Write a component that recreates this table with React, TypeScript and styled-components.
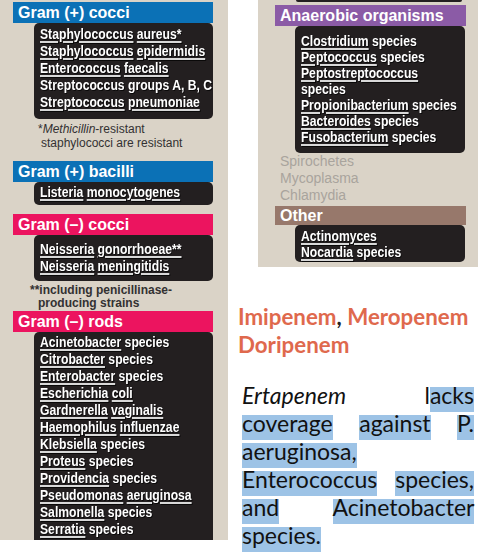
import React from "react";
import styled, { createGlobalStyle } from "styled-components";

const GlobalStyle = createGlobalStyle`
  html, body {
    margin: 0;
    padding: 0;
    background: #ffffff;
  }
`;

const narrow = `"Liberation Sans Narrow", "Arial Narrow", "Liberation Sans", Arial, sans-serif`;

// "_word" = underlined (italic in the printed source)
const grampCocci = [
  "_Staphylococcus _aureus*",
  "_Staphylococcus _epidermidis",
  "_Enterococcus _faecalis",
  "Streptococcus groups A, B, C",
  "_Streptococcus _pneumoniae",
];
const grampBacilli = ["_Listeria _monocytogenes"];
const gramnCocci = ["_Neisseria _gonorrhoeae**", "_Neisseria _meningitidis"];
const gramnRods = [
  "_Acinetobacter species",
  "_Citrobacter species",
  "_Enterobacter species",
  "_Escherichia _coli",
  "_Gardnerella _vaginalis",
  "_Haemophilus _influenzae",
  "_Klebsiella species",
  "_Proteus species",
  "_Providencia species",
  "_Pseudomonas _aeruginosa",
  "_Salmonella species",
  "_Serratia species",
];
const anaerobes = [
  "_Clostridium species",
  "_Peptococcus species",
  "_Peptostreptococcus",
  "species",
  "_Propionibacterium species",
  "_Bacteroides species",
  "_Fusobacterium species",
];
const others = ["_Actinomyces", "_Nocardia species"];

const highlighted = [
  "coverage",
  "against",
  "P.",
  "aeruginosa,",
  "Enterococcus",
  "species,",
  "and",
  "Acinetobacter",
  "species.",
];

function renderLine(text: string) {
  const words = text.split(" ");
  return words.map((w, i) => (
    <React.Fragment key={i}>
      {w.startsWith("_") ? <Name>{w.slice(1)}</Name> : w}
      {i < words.length - 1 ? " " : ""}
    </React.Fragment>
  ));
}

function OrganismBox({ lines, pad, lh = 17 }: { lines: string[]; pad: string; lh?: number }) {
  return (
    <Box $pad={pad} $lh={lh}>
      {lines.map((l) => (
        <Line key={l}>{renderLine(l)}</Line>
      ))}
    </Box>
  );
}

export default function App() {
  return (
    <>
      <GlobalStyle />
      <Page>
        <LeftPanel>
          <Header $bg="#0b71b6">Gram (+) cocci</Header>
          <OrganismBox lines={grampCocci} pad="3px 6px 8px" />
          <Note $mt={3} $indent={41} $lh={14} $weight={400}>
            <NoteLead $shift={3}>
              *<i>Methicillin</i>-resistant
            </NoteLead>
            <div>staphylococci are resistant</div>
          </Note>

          <Header $bg="#0b71b6" $mt={11}>
            Gram (+) bacilli
          </Header>
          <OrganismBox lines={grampBacilli} pad="2px 6px 4px" />

          <Header $bg="#ec145f" $mt={9}>
            Gram (–) cocci
          </Header>
          <OrganismBox lines={gramnCocci} pad="6px 6px 6px" />
          <Note $mt={3} $indent={38} $lh={12.5} $weight={700}>
            <NoteLead $shift={8}>**including penicillinase-</NoteLead>
            <div>producing strains</div>
          </Note>

          <Header $bg="#ec145f" $mt={2}>
            Gram (–) rods
          </Header>
          <OrganismBox lines={gramnRods} pad="2px 6px 8px" />
        </LeftPanel>

        <RightColumn>
          <RightPanel>
            <BoxTail />
            <Header $bg="#8b5ba6" $mt={3}>
              Anaerobic organisms
            </Header>
            <OrganismBox lines={anaerobes} pad="7px 6px 8px" lh={16} />
            <GrayList>
              <div>Spirochetes</div>
              <div>Mycoplasma</div>
              <div>Chlamydia</div>
            </GrayList>
            <Header $bg="#97786b" $mt={2} $h={19}>
              Other
            </Header>
            <OrganismBox lines={others} pad="3px 6px 2px" lh={16} />
          </RightPanel>

          <Title>
            Imipenem<Comma>,</Comma> Meropenem
            <br />
            Doripenem
          </Title>

          <Para>
            <em>Ertapenem</em> l<Mark>acks</Mark>{" "}
            {highlighted.map((w, i) => (
              <React.Fragment key={i}>
                <Mark>{w}</Mark>
                {i < highlighted.length - 1 ? " " : ""}
              </React.Fragment>
            ))}
          </Para>
        </RightColumn>
      </Page>
    </>
  );
}

const Page = styled.div`
  display: flex;
  align-items: flex-start;
  width: 485px;
  height: 558px;
  overflow: hidden;
  background: #ffffff;
`;

const LeftPanel = styled.div`
  --hl: 13px;
  --hr: 15px;
  --bl: 34px;
  --br: 15px;
  box-sizing: border-box;
  width: 228px;
  height: 540px;
  padding-top: 2px;
  overflow: hidden;
  background: #dad3c7;
`;

const RightColumn = styled.div`
  display: flex;
  flex-direction: column;
  width: 242px;
  margin-left: 8px;
`;

const RightPanel = styled.div`
  --hl: 17px;
  --hr: 12px;
  --bl: 37px;
  --br: 13px;
  width: 220px;
  margin-left: 22px;
  padding-bottom: 5px;
  background: #dad3c7;
`;

const BoxTail = styled.div`
  height: 2px;
  margin: 0 16px 0 38px;
  border-radius: 0 0 3px 3px;
  background: #231f20;
`;

const Header = styled.div<{ $bg: string; $mt?: number; $h?: number }>`
  height: ${(p) => p.$h ?? 21}px;
  line-height: ${(p) => p.$h ?? 21}px;
  margin: ${(p) => p.$mt ?? 0}px var(--hr) 0 var(--hl);
  padding-left: 5px;
  font-family: "Liberation Sans", Arial, sans-serif;
  font-size: 16px;
  font-weight: 700;
  color: #ffffff;
  background: ${(p) => p.$bg};
  white-space: nowrap;
`;

const Box = styled.div<{ $pad: string; $lh: number }>`
  margin: 0 var(--br) 0 var(--bl);
  padding: ${(p) => p.$pad};
  border-radius: 5px;
  background: #231f20;
  color: #ffffff;
  font-family: ${narrow};
  font-size: 14px;
  font-weight: 700;
  line-height: ${(p) => p.$lh}px;
  text-shadow: 1px 1px 0 rgba(0, 0, 0, 0.7);
`;

// the print uses a condensed face; squeeze the wide fallback to its width
const Line = styled.div`
  white-space: nowrap;
  transform: scaleX(0.87);
  transform-origin: left center;
`;

const Name = styled.span`
  text-decoration: underline;
  text-decoration-color: #d8d8d8;
  text-decoration-thickness: 1.5px;
  text-underline-offset: 2px;
`;

const Note = styled.div<{ $mt: number; $indent: number; $lh: number; $weight: number }>`
  margin-top: ${(p) => p.$mt}px;
  padding-left: ${(p) => p.$indent}px;
  font-family: ${narrow};
  font-size: 12px;
  font-weight: ${(p) => p.$weight};
  line-height: ${(p) => p.$lh}px;
  color: #333132;
  white-space: nowrap;
`;

const NoteLead = styled.div<{ $shift: number }>`
  margin-left: -${(p) => p.$shift}px;
`;

const GrayList = styled.div`
  padding-left: 22px;
  font-family: "Liberation Sans", Arial, sans-serif;
  font-size: 14px;
  line-height: 17px;
  color: #a9a49d;
`;

const Title = styled.div`
  margin-top: 36px;
  padding-left: 2px;
  font-family: Lato, "Open Sans", sans-serif;
  font-size: 22.3px;
  font-weight: 700;
  line-height: 28px;
  color: #df694d;
`;

const Comma = styled.span`
  color: #222222;
`;

const Para = styled.p`
  width: 232px;
  margin: 22px 0 0 6px;
  font-family: Lato, "Open Sans", sans-serif;
  font-size: 23px;
  line-height: 28px;
  text-align: justify;
  color: #111111;

  em {
    font-style: italic;
  }
`;

const Mark = styled.span`
  padding-bottom: 3px;
  background: linear-gradient(transparent 6px, #9dc3e6 6px);
`;
